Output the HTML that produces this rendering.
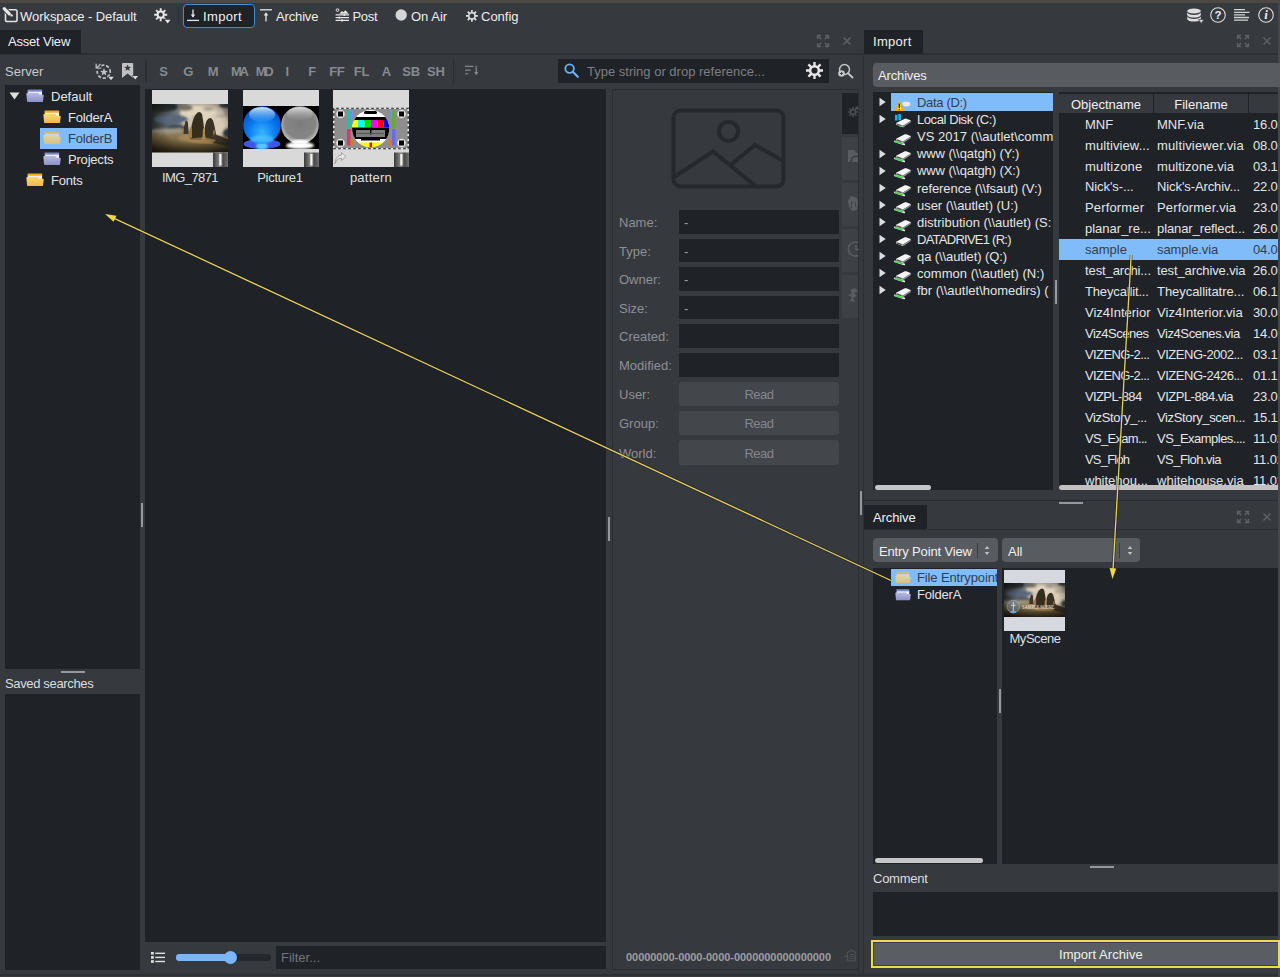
<!DOCTYPE html>
<html><head><meta charset="utf-8"><title>Workspace - Default</title>
<style>
*{box-sizing:border-box;margin:0;padding:0}
html,body{width:1280px;height:977px;overflow:hidden;background:#36393e}
body{position:relative;font-family:"Liberation Sans",sans-serif;font-size:13px;color:#e4e5e6;line-height:16px}
.a{position:absolute}
.t{position:absolute;white-space:pre;line-height:16px}
.dk{position:absolute;background:#1f2227}
.g{color:#8d9095}
.tab{position:absolute;background:#1f2227;height:24px;top:30px}
svg{position:absolute;overflow:visible}
</style></head><body>
<div class="a" style="left:0;top:0;width:1280px;height:3px;background:#4b4846"></div>
<div class="a" style="left:1278px;top:3px;width:2px;height:974px;background:#45474a"></div>
<div class="a" style="left:0;top:974px;width:1278px;height:2px;background:#2d3034"></div>
<!-- toolbar -->
<svg style="left:3px;top:7px" width="16" height="16" viewBox="0 0 16 16"><rect x="2.500" y="2.700" width="11.500" height="11.800" rx="1.800" fill="none" stroke="#e0e1e2" stroke-width="1.600"/><path d="M1.200 1.600L6.300 6.900" stroke="#36393e" stroke-width="5" stroke-linecap="round"/><path d="M1.200 1.600L6.300 6.900" stroke="#e6e7e8" stroke-width="3.200" stroke-linecap="round"/><circle cx="8.600" cy="8.400" r="1.200" fill="#e6e7e8"/></svg>
<div class="t" style="left:20px;top:9px;color:#eceded;letter-spacing:-0.050px">Workspace - Default</div>
<svg style="left:154px;top:8px" width="17" height="16" viewBox="0 0 17 16"><g fill="none" stroke="#e6e7e8" stroke-width="1.900"><path d="M6.700 0.200V13.200M0.200 6.700H13.200M2.100 2.100L11.300 11.300M11.300 2.100L2.100 11.300"/></g><circle cx="6.700" cy="6.700" r="4.100" fill="#e6e7e8"/><circle cx="6.700" cy="6.700" r="2.100" fill="#36393e"/><path d="M10.300 11.400H17L13.650 15.600Z" fill="#36393e" stroke="#36393e" stroke-width="1.400"/><path d="M10.800 11.700H16.500L13.650 15.400Z" fill="#e6e7e8"/></svg>
<div class="a" style="left:178px;top:7px;width:1px;height:18px;background:#2a2d31"></div>
<div class="a" style="left:183px;top:4px;width:72px;height:24px;border:1px solid #3d8fdc;border-radius:4px;background:#1f2227"></div>
<svg style="left:187px;top:9px" width="12" height="13" viewBox="0 0 12 13"><path d="M6 0.500V8" stroke="#e6e7e8" stroke-width="1.300" fill="none"/><path d="M3.700 5.600H8.300L6 8.600Z" fill="#e6e7e8"/><path d="M0 11.400H12" stroke="#e6e7e8" stroke-width="1.300"/></svg>
<div class="t" style="left:203px;top:9px;color:#f1f1f1;letter-spacing:0.350px">Import</div>
<svg style="left:260px;top:9px" width="12" height="13" viewBox="0 0 12 13"><path d="M0 0.800H12" stroke="#e6e7e8" stroke-width="1.300"/><path d="M6 12.500V5" stroke="#e6e7e8" stroke-width="1.300" fill="none"/><path d="M3.700 6.400H8.300L6 3.200Z" fill="#e6e7e8"/></svg>
<div class="t" style="left:276px;top:9px;color:#eceded;letter-spacing:-0.150px">Archive</div>
<svg style="left:335px;top:8px" width="14" height="14" viewBox="0 0 14 14"><g stroke="#e6e7e8" stroke-width="1.150" fill="none"><path d="M0.600 6.900H14M0.600 9.600H14M0.600 12.300H14"/></g><circle cx="2.500" cy="2.100" r="1.350" fill="none" stroke="#e6e7e8" stroke-width="1"/><path d="M4.200 5.700L7 2.900L8.300 4.200L10.400 2.200L13.600 5.700Z" fill="#e6e7e8"/><rect x="8.500" y="6" width="1.600" height="1.800" fill="#e6e7e8"/><rect x="3.600" y="8.600" width="1.600" height="2" fill="#e6e7e8"/><rect x="6.300" y="11.300" width="1.600" height="2.200" fill="#e6e7e8"/></svg>
<div class="t" style="left:352.5px;top:9px;color:#eceded;letter-spacing:-0.300px">Post</div>
<svg style="left:395px;top:9px" width="12" height="12" viewBox="0 0 12 12"><circle cx="6.200" cy="6" r="5.700" fill="#d4d5d6"/></svg>
<div class="t" style="left:411px;top:9px;color:#eceded;">On Air</div>
<svg style="left:465.700px;top:9.600px" width="11.800" height="11.800" viewBox="0 0 16 16"><g fill="none" stroke="#e0e1e2" stroke-width="2.200"><path d="M8 0V16M0 8H16M2.300 2.300L13.700 13.700M13.700 2.300L2.300 13.700"/></g><circle cx="8" cy="8" r="5.200" fill="#e0e1e2"/><circle cx="8" cy="8" r="3.300" fill="#36393e"/></svg>
<div class="t" style="left:481px;top:9px;color:#eceded;">Config</div>
<svg style="left:1187px;top:8px" width="18" height="16" viewBox="0 0 18 16"><g fill="#dcddde"><ellipse cx="7" cy="3" rx="6.800" ry="2.600"/><path d="M0.200 4.600C1.500 6.600 4.500 6.900 7 6.900S12.500 6.600 13.800 4.600V7.200C12.500 9.300 9.500 9.600 7 9.600S1.500 9.300 0.200 7.200Z"/><path d="M0.200 8.600C1.500 10.600 4.500 10.900 7 10.900S12.500 10.600 13.800 8.600V11.200C12.500 13.300 9.500 13.600 7 13.600S1.500 13.300 0.200 11.200Z"/><path d="M11.500 11.600H17L14.200 15.400Z" stroke="#36393e" stroke-width="0.700"/></g></svg>
<svg style="left:1210px;top:7px" width="16" height="16" viewBox="0 0 16 16"><circle cx="8" cy="8" r="7.300" fill="none" stroke="#dcddde" stroke-width="1.100"/><text x="8" y="12.200" text-anchor="middle" font-family="Liberation Sans" font-weight="bold" font-size="11.500" fill="#eeeeee">?</text></svg>
<svg style="left:1234px;top:9px" width="16" height="12" viewBox="0 0 16 12"><g stroke="#d0d1d2" stroke-width="1.300"><path d="M0 0.700H11M0 3.300H15.500M0 5.900H11M0 8.500H15M0 11.100H14"/></g></svg>
<svg style="left:1258px;top:7px" width="16" height="16" viewBox="0 0 16 16"><circle cx="8" cy="8" r="7.300" fill="none" stroke="#dcddde" stroke-width="1.100"/><text x="8" y="12.300" text-anchor="middle" font-family="Liberation Serif" font-style="italic" font-weight="bold" font-size="13" fill="#eeeeee">i</text></svg>
<!-- tabs -->
<div class="a" style="left:0;top:53px;width:1278px;height:2px;background:#2d3034"></div>
<div class="a" style="left:863px;top:55px;width:1px;height:919px;background:#2c2f33"></div>
<div class="tab" style="left:0;width:81px"></div>
<svg style="left:817px;top:35px" width="12" height="12" viewBox="0 0 12 12"><g stroke="#5d6065" stroke-width="1.3" fill="none"><path d="M0.500 4V0.500H4M0.500 0.500L4.300 4.300M8 0.500H11.500V4M11.500 0.500L7.700 4.300M0.500 8V11.500H4M0.500 11.500L4.300 7.700M11.500 8V11.500H8M11.500 11.500L7.700 7.700"/></g></svg>
<svg style="left:843px;top:37px" width="8" height="8" viewBox="0 0 8 8"><path d="M0.500 0.500L7.500 7.500M7.500 0.500L0.500 7.500" stroke="#5d6065" stroke-width="1.500" fill="none"/></svg>
<div class="tab" style="left:864px;width:59px"></div>
<svg style="left:1237px;top:35px" width="12" height="12" viewBox="0 0 12 12"><g stroke="#5d6065" stroke-width="1.3" fill="none"><path d="M0.500 4V0.500H4M0.500 0.500L4.300 4.300M8 0.500H11.500V4M11.500 0.500L7.700 4.300M0.500 8V11.500H4M0.500 11.500L4.300 7.700M11.500 8V11.500H8M11.500 11.500L7.700 7.700"/></g></svg>
<svg style="left:1263px;top:37px" width="8" height="8" viewBox="0 0 8 8"><path d="M0.500 0.500L7.500 7.500M7.500 0.500L0.500 7.500" stroke="#5d6065" stroke-width="1.500" fill="none"/></svg>
<div class="t" style="left:8px;top:34px;color:#f0f0f0;letter-spacing:-0.200px">Asset View</div>
<div class="t" style="left:873px;top:34px;color:#f0f0f0;letter-spacing:0.300px">Import</div>
<div class="t" style="left:5px;top:64px;color:#c9cbcd;">Server</div>
<svg style="left:94.500px;top:62.500px" width="19" height="18" viewBox="0 0 19 18"><circle cx="8.700" cy="8.700" r="6.500" fill="none" stroke="#bfc1c4" stroke-width="1.700" stroke-dasharray="3.200 1.700" stroke-dashoffset="2"/><path d="M0.200 0.400H2.100V3.300L5 0.400L6.200 1.600L3.400 4.300H6.600V5.900H0.200Z" fill="#bfc1c4" stroke="#36393e" stroke-width="0.600"/><path d="M9.00 5.10L10.06 7.74L12.90 7.93L10.71 9.76L11.41 12.52L9.00 11.00L6.59 12.52L7.29 9.76L5.10 7.93L7.94 7.74Z" fill="#bfc1c4"/><path d="M12.700 13.400H19.300L16 17.600Z" fill="#36393e"/><path d="M13.400 13.800H18.700L16 17.300Z" fill="#dcdddf"/></svg>
<svg style="left:121.800px;top:63px" width="18" height="18" viewBox="0 0 18 18"><path d="M0 0.900Q0 0 0.900 0H10.300Q11.200 0 11.200 0.900V15L5.600 10.400L0 15Z" fill="#bfc1c4"/><path d="M5.60 1.40L6.48 3.79L9.02 3.89L7.03 5.46L7.72 7.91L5.60 6.50L3.48 7.91L4.17 5.46L2.18 3.89L4.72 3.79Z" fill="#34373c"/><path d="M9.600 12.400H16.800L13.200 17Z" fill="#36393e"/><path d="M10.500 12.900H16L13.250 16.600Z" fill="#dcdddf"/></svg>
<div class="a" style="left:145px;top:59px;width:2px;height:24px;background:#2d3034"></div>
<div class="t" style="left:148.5px;top:64px;width:30px;text-align:center;color:#878a8f;font-weight:bold;letter-spacing:-0.300px">S</div>
<div class="t" style="left:173.2px;top:64px;width:30px;text-align:center;color:#878a8f;font-weight:bold;letter-spacing:-0.300px">G</div>
<div class="t" style="left:198.0px;top:64px;width:30px;text-align:center;color:#878a8f;font-weight:bold;letter-spacing:-0.300px">M</div>
<div class="t" style="left:222.8px;top:64px;width:30px;text-align:center;padding-left:2px;color:#878a8f;font-weight:bold;letter-spacing:-2.400px">MA</div>
<div class="t" style="left:247.5px;top:64px;width:30px;text-align:center;padding-left:2px;color:#878a8f;font-weight:bold;letter-spacing:-2.400px">MD</div>
<div class="t" style="left:272.2px;top:64px;width:30px;text-align:center;color:#878a8f;font-weight:bold;letter-spacing:-0.300px">I</div>
<div class="t" style="left:297.0px;top:64px;width:30px;text-align:center;color:#878a8f;font-weight:bold;letter-spacing:-0.300px">F</div>
<div class="t" style="left:321.8px;top:64px;width:30px;text-align:center;color:#878a8f;font-weight:bold;letter-spacing:-0.300px">FF</div>
<div class="t" style="left:346.5px;top:64px;width:30px;text-align:center;color:#878a8f;font-weight:bold;letter-spacing:-0.300px">FL</div>
<div class="t" style="left:371.2px;top:64px;width:30px;text-align:center;color:#878a8f;font-weight:bold;letter-spacing:-0.300px">A</div>
<div class="t" style="left:396.0px;top:64px;width:30px;text-align:center;color:#878a8f;font-weight:bold;letter-spacing:-0.300px">SB</div>
<div class="t" style="left:420.8px;top:64px;width:30px;text-align:center;color:#878a8f;font-weight:bold;letter-spacing:-0.300px">SH</div>
<div class="a" style="left:453px;top:59px;width:1px;height:24px;background:#2a2d31"></div>
<svg style="left:465px;top:65px" width="14" height="11" viewBox="0 0 15 11"><g stroke="#85888d" stroke-width="1.300" fill="none"><path d="M0 1H9M0 5H6M0 9H3.500M12 0.500V9"/></g><path d="M9.800 7.200H14.200L12 10.500Z" fill="#85888d"/></svg>
<div class="dk" style="left:558px;top:59px;width:271px;height:24px"></div>
<svg style="left:564px;top:63px" width="15" height="15" viewBox="0 0 15 15"><circle cx="5.600" cy="5.600" r="4.300" fill="none" stroke="#6db3f2" stroke-width="1.800"/><path d="M8.800 8.800L13.800 13.800" stroke="#6db3f2" stroke-width="2.200" stroke-linecap="round"/></svg>
<div class="t" style="left:587px;top:64px;color:#7c7f84;">Type string or drop reference...</div>
<svg style="left:806px;top:62px" width="17" height="17" viewBox="0 0 16 16"><g fill="none" stroke="#e6e7e8" stroke-width="2.200"><path d="M8 0V16M0 8H16M2.300 2.300L13.700 13.700M13.700 2.300L2.300 13.700"/></g><circle cx="8" cy="8" r="5.200" fill="#e6e7e8"/><circle cx="8" cy="8" r="2.900" fill="#1f2227"/></svg>
<svg style="left:837px;top:63px" width="17" height="17" viewBox="0 0 17 17"><circle cx="7.500" cy="6.500" r="5" fill="none" stroke="#c4c6c8" stroke-width="1.500"/><path d="M11 10.200L15.500 14.500" stroke="#c4c6c8" stroke-width="1.900" stroke-linecap="round"/><circle cx="4.500" cy="10.500" r="3.300" fill="#c4c6c8"/><path d="M3 10.500H6M4.500 9V12" stroke="#36393e" stroke-width="0.900"/></svg>
<div class="dk" style="left:5px;top:85px;width:135px;height:584px"></div>
<svg style="left:9px;top:92px" width="11" height="8" viewBox="0 0 11 8"><path d="M0.500 0.500H10.500L5.500 7.500Z" fill="#dcdddf"/></svg>
<svg style="left:26px;top:89px" width="18" height="14" viewBox="0 0 18 14" preserveAspectRatio="none"><defs><linearGradient id="fb26_89" x1="0" y1="0" x2="0" y2="1"><stop offset="0" stop-color="#b6bae0"/><stop offset="1" stop-color="#8c90c8"/></linearGradient></defs><path d="M1.500 1Q1.500 0.400 2.100 0.400H15.600Q16.200 0.400 16.200 1V5H1.500Z" fill="#8088cc"/><path d="M2.200 2.700H16V7H2.200Z" fill="#eef0f6"/><path d="M0.400 4.900Q0.300 4.100 1.100 4.100H12.200L13.500 5.700H17Q17.800 5.700 17.700 6.500L17 12.400Q16.900 13.100 16.200 13.100H1.900Q1.200 13.100 1.100 12.400Z" fill="url(#fb26_89)"/></svg><div class="t" style="left:51px;top:89px;color:#e4e5e6;">Default</div>
<svg style="left:43px;top:110px" width="18" height="14" viewBox="0 0 18 14" preserveAspectRatio="none"><defs><linearGradient id="fy43_110" x1="0" y1="0" x2="0" y2="1"><stop offset="0" stop-color="#fbd878"/><stop offset="1" stop-color="#f4b844"/></linearGradient></defs><path d="M1.500 1Q1.500 0.400 2.100 0.400H15.600Q16.200 0.400 16.200 1V5H1.500Z" fill="#f6a820"/><path d="M2.200 2.700H16V7H2.200Z" fill="#eef0f6"/><path d="M0.400 4.900Q0.300 4.100 1.100 4.100H12.200L13.500 5.700H17Q17.800 5.700 17.700 6.500L17 12.400Q16.900 13.100 16.200 13.100H1.900Q1.200 13.100 1.100 12.400Z" fill="url(#fy43_110)"/></svg><div class="t" style="left:68px;top:110px;color:#e4e5e6;letter-spacing:-0.200px">FolderA</div>
<div class="a" style="left:40px;top:128px;width:77px;height:21px;background:#80bbfa"></div>
<svg style="left:43px;top:131px" width="18" height="14" viewBox="0 0 18 14" preserveAspectRatio="none"><defs><linearGradient id="fs43_131" x1="0" y1="0" x2="0" y2="1"><stop offset="0" stop-color="#e4d4a0"/><stop offset="1" stop-color="#d6c088"/></linearGradient></defs><path d="M1.500 1Q1.500 0.400 2.100 0.400H15.600Q16.200 0.400 16.200 1V5H1.500Z" fill="#d8b870"/><path d="M2.200 2.700H16V7H2.200Z" fill="#c4d8f0"/><path d="M0.400 4.900Q0.300 4.100 1.100 4.100H12.200L13.500 5.700H17Q17.800 5.700 17.700 6.500L17 12.400Q16.900 13.100 16.200 13.100H1.900Q1.200 13.100 1.100 12.400Z" fill="url(#fs43_131)"/></svg><div class="t" style="left:68px;top:131px;color:#333f50;letter-spacing:-0.200px">FolderB</div>
<svg style="left:43px;top:152px" width="18" height="14" viewBox="0 0 18 14" preserveAspectRatio="none"><defs><linearGradient id="fb43_152" x1="0" y1="0" x2="0" y2="1"><stop offset="0" stop-color="#b6bae0"/><stop offset="1" stop-color="#8c90c8"/></linearGradient></defs><path d="M1.500 1Q1.500 0.400 2.100 0.400H15.600Q16.200 0.400 16.200 1V5H1.500Z" fill="#8088cc"/><path d="M2.200 2.700H16V7H2.200Z" fill="#eef0f6"/><path d="M0.400 4.900Q0.300 4.100 1.100 4.100H12.200L13.500 5.700H17Q17.800 5.700 17.700 6.500L17 12.400Q16.900 13.100 16.200 13.100H1.900Q1.200 13.100 1.100 12.400Z" fill="url(#fb43_152)"/></svg><div class="t" style="left:68px;top:152px;color:#e4e5e6;letter-spacing:-0.200px">Projects</div>
<svg style="left:26px;top:173px" width="18" height="14" viewBox="0 0 18 14" preserveAspectRatio="none"><defs><linearGradient id="fy26_173" x1="0" y1="0" x2="0" y2="1"><stop offset="0" stop-color="#fbd878"/><stop offset="1" stop-color="#f4b844"/></linearGradient></defs><path d="M1.500 1Q1.500 0.400 2.100 0.400H15.600Q16.200 0.400 16.200 1V5H1.500Z" fill="#f6a820"/><path d="M2.200 2.700H16V7H2.200Z" fill="#eef0f6"/><path d="M0.400 4.900Q0.300 4.100 1.100 4.100H12.200L13.500 5.700H17Q17.800 5.700 17.700 6.500L17 12.400Q16.900 13.100 16.200 13.100H1.900Q1.200 13.100 1.100 12.400Z" fill="url(#fy26_173)"/></svg><div class="t" style="left:51px;top:173px;color:#e4e5e6;letter-spacing:-0.200px">Fonts</div>
<div class="a" style="left:61px;top:671px;width:24px;height:2px;background:#97989b"></div>
<div class="dk" style="left:5px;top:694px;width:135px;height:276px"></div>
<div class="a" style="left:141px;top:503px;width:2px;height:24px;background:#97989b"></div>
<div class="dk" style="left:145px;top:89px;width:461px;height:853px"></div>
<div class="t" style="left:5px;top:676px;color:#dcddde;letter-spacing:-0.350px">Saved searches</div>
<svg style="left:152px;top:90px" width="76" height="77" viewBox="0 0 76 77">
<defs><linearGradient id="cg" x1="0" y1="0" x2="1" y2="0"><stop offset="0" stop-color="#3a3a3a"/><stop offset="0.450" stop-color="#8a8a8a"/><stop offset="0.700" stop-color="#4c4c4c"/><stop offset="1" stop-color="#707070"/></linearGradient>
<linearGradient id="sky" x1="0" y1="0" x2="1" y2="0"><stop offset="0" stop-color="#363e3a"/><stop offset="0.300" stop-color="#6a7078"/><stop offset="0.550" stop-color="#d4c8b4"/><stop offset="0.850" stop-color="#e0d4c0"/><stop offset="1" stop-color="#a8a090"/></linearGradient>
<linearGradient id="gnd" x1="0" y1="0" x2="0" y2="1"><stop offset="0" stop-color="#a48e6c"/><stop offset="0.500" stop-color="#74623e"/><stop offset="1" stop-color="#282214"/></linearGradient>
<radialGradient id="vg" cx="0.550" cy="0.450" r="0.750"><stop offset="0.500" stop-color="#000" stop-opacity="0"/><stop offset="1" stop-color="#000" stop-opacity="0.700"/></radialGradient>
<filter id="bl"><feGaussianBlur stdDeviation="0.900"/></filter><filter id="bl0"><feGaussianBlur stdDeviation="0.700"/></filter><clipPath id="c1"><rect x="0" y="14" width="76" height="48.500"/></clipPath></defs>
<rect width="76" height="77" fill="#d9d9d9"/>
<g clip-path="url(#c1)"><rect x="0" y="14" width="76" height="30" fill="url(#sky)"/>
<g filter="url(#bl)"><ellipse cx="50" cy="23" rx="22" ry="8" fill="#e0d4be"/><ellipse cx="66" cy="33" rx="11" ry="9" fill="#d8ccb6"/><ellipse cx="40" cy="33" rx="10" ry="5" fill="#cfc4b0"/><ellipse cx="19" cy="29" rx="17" ry="4.500" fill="#5a687c"/><ellipse cx="25" cy="38" rx="10" ry="3.500" fill="#3e4c5c"/><ellipse cx="8" cy="17" rx="18" ry="5" fill="#2e3632"/><ellipse cx="76" cy="43" rx="5" ry="5" fill="#2c3c44"/><ellipse cx="74" cy="15.500" rx="7" ry="2.500" fill="#3c4a52"/><ellipse cx="33" cy="18" rx="8" ry="3" fill="#7a7468"/><ellipse cx="56" cy="19" rx="5" ry="1.800" fill="#a8a096"/><ellipse cx="44" cy="27" rx="4" ry="1.500" fill="#b8ae9c"/><ellipse cx="68" cy="26" rx="5" ry="2" fill="#c0b6a4"/>
<path d="M-2 41L28 38L50 43L78 47V66H-2Z" fill="url(#gnd)"/><ellipse cx="14" cy="41" rx="16" ry="2.500" fill="#9c9484"/><ellipse cx="40" cy="48" rx="14" ry="4" fill="#b49464" opacity="0.600"/></g>
<g filter="url(#bl0)"><path d="M31.500 44L32 37L33.500 31L35 30.500L36 33L36.500 44Z" fill="#3c3626"/><path d="M38.500 50L39.500 36L41 30L43 25.500L45.500 22.500L48 22L50 24L51 30L52 38L53 50Z" fill="#352e1e"/><path d="M52.500 50L53 36L54.500 31L56.500 28.500L59 28L61 30.500L62.500 36L64 44L66 50Z" fill="#383022"/><path d="M36.500 47L38 38L40 35.500L40 48Z" fill="#a07840"/><path d="M50.300 50L51 39L52.500 37L53.500 50Z" fill="#b08848"/><path d="M60.500 50L61 41L62.500 39L64.500 50Z" fill="#8a6a3c"/><path d="M62 44L70 47L78 50V57L58 52Z" fill="#3e3626"/><path d="M36 49L52 47L64 50L60 54L40 53Z" fill="#a88450" opacity="0.700"/></g>
<rect x="0" y="14" width="76" height="48.500" fill="url(#vg)"/></g>
<g transform="translate(61,62.500)"><rect width="15" height="14.500" fill="url(#cg)"/><rect x="6.300" y="1.500" width="2.200" height="11.500" fill="#f4f4f4"/></g></svg>
<div class="t" style="left:150px;top:170px;width:80px;text-align:center;color:#dfe0e1;letter-spacing:-0.600px">IMG_7871</div>
<svg style="left:243px;top:90px" width="76" height="77" viewBox="0 0 76 77">
<defs><radialGradient id="bs" cx="0.500" cy="0.700" r="0.700"><stop offset="0" stop-color="#38b4ff"/><stop offset="0.500" stop-color="#0a7cf0"/><stop offset="1" stop-color="#0848c0"/></radialGradient>
<linearGradient id="bh" x1="0" y1="0" x2="0" y2="1"><stop offset="0" stop-color="#d8f0ff" stop-opacity="0.950"/><stop offset="1" stop-color="#6ac0ff" stop-opacity="0.100"/></linearGradient>
<radialGradient id="gs" cx="0.500" cy="0.450" r="0.550"><stop offset="0" stop-color="#7c7c7c"/><stop offset="0.750" stop-color="#868686"/><stop offset="1" stop-color="#c8c8c8"/></radialGradient>
<linearGradient id="gh" x1="0" y1="0" x2="0" y2="1"><stop offset="0" stop-color="#e8e8e8" stop-opacity="0.900"/><stop offset="1" stop-color="#a0a0a0" stop-opacity="0"/></linearGradient>
<filter id="b2"><feGaussianBlur stdDeviation="1.200"/></filter><clipPath id="c2"><rect x="0" y="16" width="76" height="43"/></clipPath></defs>
<rect width="76" height="77" fill="#d9d9d9"/><rect x="0" y="16" width="76" height="43" fill="#000"/>
<g clip-path="url(#c2)"><ellipse cx="19" cy="54" rx="18.500" ry="5" fill="#3c58e0"/><ellipse cx="19" cy="56" rx="6" ry="3.500" fill="#58c8ff" filter="url(#b2)"/>
<circle cx="19" cy="35" r="18.800" fill="url(#bs)"/><ellipse cx="19" cy="24.500" rx="13" ry="7.500" fill="url(#bh)"/><ellipse cx="19" cy="49" rx="12" ry="4" fill="#5cd0ff" opacity="0.600" filter="url(#b2)"/>
<ellipse cx="57" cy="55.500" rx="14" ry="3.500" fill="#fff" filter="url(#b2)"/>
<circle cx="57" cy="35" r="18.800" fill="url(#gs)"/><ellipse cx="57" cy="24" rx="13" ry="7" fill="url(#gh)"/><ellipse cx="57" cy="52" rx="9" ry="2.500" fill="#fff" filter="url(#b2)"/></g>
<g transform="translate(61,62.500)"><rect width="15" height="14.500" fill="url(#cg)"/><rect x="6.300" y="1.500" width="2.200" height="11.500" fill="#f4f4f4"/></g></svg>
<div class="t" style="left:240px;top:170px;width:80px;text-align:center;color:#dfe0e1;letter-spacing:-0.250px">Picture1</div>
<svg style="left:333px;top:90px" width="76" height="77" viewBox="0 0 76 77">
<defs><clipPath id="c3"><circle cx="37.700" cy="38.600" r="18.600"/></clipPath><filter id="b5" x="0" y="0" width="1" height="1"><feGaussianBlur stdDeviation="0.400"/></filter><clipPath id="c5"><rect x="0" y="17.500" width="76" height="42"/></clipPath></defs>
<rect width="76" height="77" fill="#d9d9d9"/>
<g clip-path="url(#c5)"><g filter="url(#b5)"><rect x="0" y="17.500" width="76" height="42" fill="#8e8e8e"/>
<rect x="0.750" y="18.250" width="74.500" height="40.500" fill="none" stroke="#e8e8e8" stroke-width="1.500" stroke-dasharray="2.500 2.500"/><rect x="0.750" y="18.250" width="74.500" height="40.500" fill="none" stroke="#4a4a4a" stroke-width="1.500" stroke-dasharray="2.500 2.500" stroke-dashoffset="2.500"/>
<g><circle cx="7.500" cy="24" r="4.300" fill="#e4e4e4"/><rect x="5" y="21.500" width="5" height="5" fill="#000"/><circle cx="68.500" cy="24" r="4.300" fill="#e4e4e4"/><rect x="66" y="21.500" width="5" height="5" fill="#000"/><circle cx="7.500" cy="53" r="4.300" fill="#e4e4e4"/><rect x="5" y="50.500" width="5" height="5" fill="#000"/><circle cx="68.500" cy="53" r="4.300" fill="#e4e4e4"/><rect x="66" y="50.500" width="5" height="5" fill="#000"/></g>
<rect x="14" y="20.500" width="3.500" height="17.500" fill="#18c8a0"/><rect x="17.500" y="20.500" width="2.500" height="8" fill="#6890ff"/><rect x="14" y="39" width="3.500" height="16.500" fill="#d83870"/><rect x="17.500" y="49.500" width="2.500" height="6" fill="#e07810"/>
<rect x="59" y="20.500" width="3.500" height="17.500" fill="#68a838"/><rect x="56" y="20.500" width="2.500" height="8" fill="#6890ff"/><rect x="59" y="39" width="3.500" height="16.500" fill="#6868f8"/><rect x="56" y="49.500" width="2.500" height="6" fill="#e07810"/>
<g clip-path="url(#c3)"><rect x="18" y="19" width="40" height="40" fill="#fff"/><rect x="31" y="21" width="13" height="3" rx="1.500" fill="#000"/><rect x="18" y="27" width="40" height="4" fill="#000"/>
<rect x="18" y="30" width="7" height="7.500" fill="#ffff00"/><rect x="25" y="30" width="6.500" height="7.500" fill="#00ffff"/><rect x="31.500" y="30" width="6.500" height="7.500" fill="#00e000"/><rect x="38" y="30" width="6.500" height="7.500" fill="#ff00ff"/><rect x="44.500" y="30" width="6" height="7.500" fill="#ff0000"/><rect x="50.500" y="30" width="7" height="7.500" fill="#0000e0"/>
<rect x="18" y="37.500" width="40" height="11.500" fill="#000"/><rect x="23" y="40" width="29" height="7" fill="#7c7c7c"/><rect x="37" y="37.500" width="1.400" height="7" fill="#000"/><rect x="24" y="43" width="27" height="1" fill="#555"/>
<rect x="18" y="49" width="40" height="3.500" fill="#fff"/><rect x="28" y="49" width="19" height="1.500" fill="#000"/><rect x="18" y="52.500" width="40" height="6" fill="#ffff00"/><rect x="36.500" y="52.500" width="2.500" height="6" fill="#ff0000"/></g>
</g></g>
<path d="M2 73.500C2.500 68 5 65.500 8.500 65V62.500L13 66.500L8.500 70.500V68C5.500 68 3.500 70 2 73.500Z" fill="#e8e8e8" stroke="#8c8c8c" stroke-width="0.700"/>
<g transform="translate(61,62.500)"><rect width="15" height="14.500" fill="url(#cg)"/><rect x="6.300" y="1.500" width="2.200" height="11.500" fill="#f4f4f4"/></g></svg>
<div class="t" style="left:331px;top:170px;width:80px;text-align:center;color:#dfe0e1;letter-spacing:0.250px">pattern</div>
<svg style="left:151px;top:952px" width="14" height="11" viewBox="0 0 14 11"><g fill="#e0e1e2"><rect x="0" y="0" width="2.800" height="2.600"/><rect x="0" y="4.100" width="2.800" height="2.600"/><rect x="0" y="8.200" width="2.800" height="2.600"/><rect x="4.300" y="0.600" width="9.700" height="1.400"/><rect x="4.300" y="4.700" width="9.700" height="1.400"/><rect x="4.300" y="8.800" width="9.700" height="1.400"/></g></svg>
<div class="a" style="left:176px;top:954px;width:95px;height:6.500px;border-radius:3px;background:#25282c"></div>
<div class="a" style="left:176px;top:954px;width:52px;height:6.500px;border-radius:3px;background:#7ab6f8"></div>
<div class="a" style="left:223.500px;top:951px;width:13px;height:13px;border-radius:7px;background:#7ab6f8"></div>
<div class="dk" style="left:276px;top:946px;width:330px;height:23px"></div>
<div class="a" style="left:608px;top:517px;width:2px;height:24px;background:#97989b"></div>
<div class="t" style="left:281px;top:950px;color:#72757a;">Filter...</div>
<!-- props -->
<div class="a" style="left:612px;top:89px;width:247px;height:881px;border:1px solid #2a2d31;background:#36393e"></div>
<svg style="left:671px;top:108px" width="115" height="81" viewBox="0 0 115 81"><g fill="none" stroke="#25282c" stroke-width="4"><rect x="2.500" y="2.500" width="110" height="76" rx="7"/><circle cx="57.500" cy="23.300" r="9.600"/><path d="M2.500 69.500L42 43.500L84 77.500M59.500 57L84 37L112.500 53" stroke-linejoin="miter"/></g></svg>
<div class="dk" style="left:679px;top:210.0px;width:160px;height:23.500px"></div><div class="t" style="left:619px;top:215px;color:#8d9095;">Name:</div>
<div class="t" style="left:684px;top:215px;color:#9a9da1;">-</div>
<div class="dk" style="left:679px;top:238.6px;width:160px;height:23.500px"></div><div class="t" style="left:619px;top:244px;color:#8d9095;">Type:</div>
<div class="t" style="left:684px;top:244px;color:#9a9da1;">-</div>
<div class="dk" style="left:679px;top:267.2px;width:160px;height:23.500px"></div><div class="t" style="left:619px;top:272px;color:#8d9095;">Owner:</div>
<div class="t" style="left:684px;top:272px;color:#9a9da1;">-</div>
<div class="dk" style="left:679px;top:295.8px;width:160px;height:23.500px"></div><div class="t" style="left:619px;top:301px;color:#8d9095;">Size:</div>
<div class="t" style="left:684px;top:301px;color:#9a9da1;">-</div>
<div class="dk" style="left:679px;top:324.4px;width:160px;height:23.500px"></div><div class="t" style="left:619px;top:329px;color:#8d9095;">Created:</div>
<div class="dk" style="left:679px;top:353.0px;width:160px;height:23.500px"></div><div class="t" style="left:619px;top:358px;color:#8d9095;">Modified:</div>
<div class="a" style="left:679px;top:381.5px;width:160px;height:24.500px;border-radius:3px;background:#43464b"></div><div class="t" style="left:619px;top:387px;color:#8d9095;">User:</div>
<div class="t" style="left:679px;top:387px;width:160px;text-align:center;color:#84878c;letter-spacing:-0.500px">Read</div>
<div class="a" style="left:679px;top:410.9px;width:160px;height:24.500px;border-radius:3px;background:#43464b"></div><div class="t" style="left:619px;top:416px;color:#8d9095;">Group:</div>
<div class="t" style="left:679px;top:416px;width:160px;text-align:center;color:#84878c;letter-spacing:-0.500px">Read</div>
<div class="a" style="left:679px;top:440.3px;width:160px;height:24.500px;border-radius:3px;background:#43464b"></div><div class="t" style="left:619px;top:446px;color:#8d9095;">World:</div>
<div class="t" style="left:679px;top:446px;width:160px;text-align:center;color:#84878c;letter-spacing:-0.500px">Read</div>
<div class="t" style="left:626px;top:949px;font-size:11px;font-weight:bold;color:#9c9ea1;letter-spacing:-0.050px">00000000-0000-0000-0000000000000000</div>
<svg style="left:843px;top:949px" width="13" height="13" viewBox="0 0 13 13"><g fill="none" stroke="#4c4f54" stroke-width="1.200"><path d="M4.500 3.500L8 0.800L12.300 3.500V11.800H4.500ZM6.500 5.500H11M6.500 7.500H11M6.500 9.500H11M0.500 7.500H4.500"/></g></svg>
<div class="dk" style="left:842px;top:93px;width:16px;height:41px"></div>
<div class="a" style="left:842px;top:137px;width:16px;height:43px;background:#3d4045"></div>
<div class="a" style="left:842px;top:183px;width:16px;height:43px;background:#3d4045"></div>
<div class="a" style="left:842px;top:229px;width:16px;height:43px;background:#3d4045"></div>
<div class="a" style="left:842px;top:275px;width:16px;height:43px;background:#3d4045"></div>
<div class="a" style="left:842px;top:90px;width:17px;height:232px;overflow:hidden">
<svg style="left:6px;top:15px" width="10" height="14" viewBox="0 0 10 14"><g fill="none" stroke="#4b4e53" stroke-width="1.600"><path d="M5 2V12M0 7H10M1.500 3.500L8.500 10.500M8.500 3.500L1.500 10.500"/></g><circle cx="5" cy="7" r="3" fill="#4b4e53"/><circle cx="5" cy="7" r="1.500" fill="#1f2227"/><circle cx="9" cy="3" r="1.800" fill="#4b4e53"/></svg>
<svg style="left:6px;top:60px" width="10" height="13" viewBox="0 0 10 13"><path d="M0 0H6L10 4V12H0Z" fill="#595c61"/><path d="M3 12C3 8 6 6 10 6" stroke="#3d4045" stroke-width="1.800" fill="none"/></svg>
<svg style="left:6px;top:106px" width="10" height="15" viewBox="0 0 10 15"><path d="M3 0L9 2L10 6L9 14L4 15L1 11L0 5Z" fill="#595c61"/><path d="M4 5L3 12M7 6L8 11" stroke="#3d4045" stroke-width="1"/></svg>
<svg style="left:7px;top:151px" width="10" height="16" viewBox="0 0 10 16"><path d="M9 1.500A7 7 0 1 0 9 14.500" fill="none" stroke="#595c61" stroke-width="1.500"/><path d="M7 4V8.500H10" fill="none" stroke="#595c61" stroke-width="1.500"/></svg>
<svg style="left:6px;top:198px" width="10" height="15" viewBox="0 0 10 15"><path d="M2 2L7 0L10 3L6 5L9 8L5 10L7 14L2 13L4 9L0 7L4 5Z" fill="#595c61"/></svg>
</div>
<div class="a" style="left:860px;top:491px;width:2px;height:24px;background:#97989b"></div>
<!-- import -->
<div class="a" style="left:873px;top:63px;width:410px;height:24px;border-radius:4px;background:#585b5f"></div>
<div class="t" style="left:878px;top:68px;color:#f0f0f0;letter-spacing:-0.150px">Archives</div>
<div class="dk" style="left:873px;top:92px;width:180px;height:398px;overflow:hidden">
<div class="a" style="left:18px;top:1px;width:162px;height:17.500px;background:#80bbfa"></div>
<svg style="left:6.3px;top:5.3px" width="7" height="10" viewBox="0 0 7 10"><path d="M0.500 0.700V9.300L6.700 5Z" fill="#dcdddf"/></svg><svg style="left:21px;top:7.5px" width="18" height="12" viewBox="0 0 18 12"><path d="M8 3.500Q9.500 0.500 13 1.800Q17 2 16.300 5Q15 7 10 6.500Z" fill="#ece8e0"/><path d="M5.300 0L10.400 11H0Z" fill="#ffae00"/><path d="M5.300 2L7.500 9.500H3Z" fill="#ffd84a"/><path d="M5.300 3.500V8M5.300 9.200V10.300" stroke="#3a2800" stroke-width="1.400"/></svg><div class="t" style="left:44px;top:3px;color:#333f50;letter-spacing:-0.32px">Data (D:)</div>
<svg style="left:6.3px;top:22.4px" width="7" height="10" viewBox="0 0 7 10"><path d="M0.500 0.700V9.300L6.700 5Z" fill="#dcdddf"/></svg><svg style="left:21px;top:22.2px" width="18" height="14" viewBox="0 0 18 14"><rect x="1" y="0.700" width="2.500" height="5.800" fill="#18b4f0"/><rect x="4.300" y="0" width="2.600" height="6.300" fill="#18b4f0"/><g transform="translate(0.6,4.3) scale(0.940,0.880)"><path d="M1.600 5.300L10.800 0.400Q11.600 0.100 12.400 0.400L17 2.300Q17.600 2.700 17 3.200L9.600 8.300Q9 8.600 8.300 8.300L1.600 5.600Z" fill="#f4f4f4"/><path d="M1.500 5.400L9 8.450V10.400L1.500 7.300Z" fill="#b0b0b0"/><path d="M9 8.450L17.300 2.800V4.600L9 10.400Z" fill="#8e8e8e"/><path d="M2.800 6.500L7.200 8.350V9.100L2.800 7.250Z" fill="#2a2a2a"/></g><path d="M5 12L7 12.800" stroke="#46d250" stroke-width="1"/></svg><div class="t" style="left:44px;top:20px;color:#e4e5e6;letter-spacing:-0.42px">Local Disk (C:)</div>
<svg style="left:21px;top:41.0px" width="18" height="12" viewBox="0 0 18 12"><g transform="translate(0.6,1) scale(0.940,0.880)"><path d="M1.600 5.300L10.800 0.400Q11.600 0.100 12.400 0.400L17 2.300Q17.600 2.700 17 3.200L9.600 8.300Q9 8.600 8.300 8.300L1.600 5.600Z" fill="#f4f4f4"/><path d="M1.500 5.400L9 8.450V10.400L1.500 7.300Z" fill="#b0b0b0"/><path d="M9 8.450L17.300 2.800V4.600L9 10.400Z" fill="#8e8e8e"/><path d="M2.800 6.500L7.200 8.350V9.100L2.800 7.250Z" fill="#2a2a2a"/></g><path d="M0.800 8.400L10.200 11.400" stroke="#e8e8e8" stroke-width="1.900" stroke-linecap="round"/><path d="M1.300 8.550L8.300 10.800" stroke="#46d250" stroke-width="1.500" stroke-linecap="round"/></svg><div class="t" style="left:44px;top:37px;color:#e4e5e6;letter-spacing:0.02px">VS 2017 (\\autlet\comm</div>
<svg style="left:6.3px;top:56.6px" width="7" height="10" viewBox="0 0 7 10"><path d="M0.500 0.700V9.300L6.700 5Z" fill="#dcdddf"/></svg><svg style="left:21px;top:58.1px" width="18" height="12" viewBox="0 0 18 12"><g transform="translate(0.6,1) scale(0.940,0.880)"><path d="M1.600 5.300L10.800 0.400Q11.600 0.100 12.400 0.400L17 2.300Q17.600 2.700 17 3.200L9.600 8.300Q9 8.600 8.300 8.300L1.600 5.600Z" fill="#f4f4f4"/><path d="M1.500 5.400L9 8.450V10.400L1.500 7.300Z" fill="#b0b0b0"/><path d="M9 8.450L17.300 2.800V4.600L9 10.400Z" fill="#8e8e8e"/><path d="M2.800 6.500L7.200 8.350V9.100L2.800 7.250Z" fill="#2a2a2a"/></g><path d="M0.800 8.400L10.200 11.400" stroke="#e8e8e8" stroke-width="1.900" stroke-linecap="round"/><path d="M1.300 8.550L8.300 10.800" stroke="#46d250" stroke-width="1.500" stroke-linecap="round"/></svg><div class="t" style="left:44px;top:54px;color:#e4e5e6;letter-spacing:-0.1px">www (\\qatgh) (Y:)</div>
<svg style="left:6.3px;top:73.7px" width="7" height="10" viewBox="0 0 7 10"><path d="M0.500 0.700V9.300L6.700 5Z" fill="#dcdddf"/></svg><svg style="left:21px;top:75.2px" width="18" height="12" viewBox="0 0 18 12"><g transform="translate(0.6,1) scale(0.940,0.880)"><path d="M1.600 5.300L10.800 0.400Q11.600 0.100 12.400 0.400L17 2.300Q17.600 2.700 17 3.200L9.600 8.300Q9 8.600 8.300 8.300L1.600 5.600Z" fill="#f4f4f4"/><path d="M1.500 5.400L9 8.450V10.400L1.500 7.300Z" fill="#b0b0b0"/><path d="M9 8.450L17.300 2.800V4.600L9 10.400Z" fill="#8e8e8e"/><path d="M2.800 6.500L7.200 8.350V9.100L2.800 7.250Z" fill="#2a2a2a"/></g><path d="M0.800 8.400L10.200 11.400" stroke="#e8e8e8" stroke-width="1.900" stroke-linecap="round"/><path d="M1.300 8.550L8.300 10.800" stroke="#46d250" stroke-width="1.500" stroke-linecap="round"/></svg><div class="t" style="left:44px;top:71px;color:#e4e5e6;letter-spacing:-0.1px">www (\\qatgh) (X:)</div>
<svg style="left:6.3px;top:90.8px" width="7" height="10" viewBox="0 0 7 10"><path d="M0.500 0.700V9.300L6.700 5Z" fill="#dcdddf"/></svg><svg style="left:21px;top:92.3px" width="18" height="12" viewBox="0 0 18 12"><g transform="translate(0.6,1) scale(0.940,0.880)"><path d="M1.600 5.300L10.800 0.400Q11.600 0.100 12.400 0.400L17 2.300Q17.600 2.700 17 3.200L9.600 8.300Q9 8.600 8.300 8.300L1.600 5.600Z" fill="#f4f4f4"/><path d="M1.500 5.400L9 8.450V10.400L1.500 7.300Z" fill="#b0b0b0"/><path d="M9 8.450L17.300 2.800V4.600L9 10.400Z" fill="#8e8e8e"/><path d="M2.800 6.500L7.200 8.350V9.100L2.800 7.250Z" fill="#2a2a2a"/></g><path d="M0.800 8.400L10.200 11.400" stroke="#e8e8e8" stroke-width="1.900" stroke-linecap="round"/><path d="M1.300 8.550L8.300 10.800" stroke="#46d250" stroke-width="1.500" stroke-linecap="round"/></svg><div class="t" style="left:44px;top:89px;color:#e4e5e6;letter-spacing:-0.08px">reference (\\fsaut) (V:)</div>
<svg style="left:6.3px;top:107.9px" width="7" height="10" viewBox="0 0 7 10"><path d="M0.500 0.700V9.300L6.700 5Z" fill="#dcdddf"/></svg><svg style="left:21px;top:109.4px" width="18" height="12" viewBox="0 0 18 12"><g transform="translate(0.6,1) scale(0.940,0.880)"><path d="M1.600 5.300L10.800 0.400Q11.600 0.100 12.400 0.400L17 2.300Q17.600 2.700 17 3.200L9.600 8.300Q9 8.600 8.300 8.300L1.600 5.600Z" fill="#f4f4f4"/><path d="M1.500 5.400L9 8.450V10.400L1.500 7.300Z" fill="#b0b0b0"/><path d="M9 8.450L17.300 2.800V4.600L9 10.400Z" fill="#8e8e8e"/><path d="M2.800 6.500L7.200 8.350V9.100L2.800 7.250Z" fill="#2a2a2a"/></g><path d="M0.800 8.400L10.200 11.400" stroke="#e8e8e8" stroke-width="1.900" stroke-linecap="round"/><path d="M1.300 8.550L8.300 10.800" stroke="#46d250" stroke-width="1.500" stroke-linecap="round"/></svg><div class="t" style="left:44px;top:106px;color:#e4e5e6;letter-spacing:-0.04px">user (\\autlet) (U:)</div>
<svg style="left:6.3px;top:125.0px" width="7" height="10" viewBox="0 0 7 10"><path d="M0.500 0.700V9.300L6.700 5Z" fill="#dcdddf"/></svg><svg style="left:21px;top:126.5px" width="18" height="12" viewBox="0 0 18 12"><g transform="translate(0.6,1) scale(0.940,0.880)"><path d="M1.600 5.300L10.800 0.400Q11.600 0.100 12.400 0.400L17 2.300Q17.600 2.700 17 3.200L9.600 8.300Q9 8.600 8.300 8.300L1.600 5.600Z" fill="#f4f4f4"/><path d="M1.500 5.400L9 8.450V10.400L1.500 7.300Z" fill="#b0b0b0"/><path d="M9 8.450L17.300 2.800V4.600L9 10.400Z" fill="#8e8e8e"/><path d="M2.800 6.500L7.200 8.350V9.100L2.800 7.250Z" fill="#2a2a2a"/></g><path d="M0.800 8.400L10.200 11.400" stroke="#e8e8e8" stroke-width="1.900" stroke-linecap="round"/><path d="M1.300 8.550L8.300 10.800" stroke="#46d250" stroke-width="1.500" stroke-linecap="round"/></svg><div class="t" style="left:44px;top:123px;color:#e4e5e6;letter-spacing:0px">distribution (\\autlet) (S:</div>
<svg style="left:6.3px;top:142.1px" width="7" height="10" viewBox="0 0 7 10"><path d="M0.500 0.700V9.300L6.700 5Z" fill="#dcdddf"/></svg><svg style="left:21px;top:143.6px" width="18" height="12" viewBox="0 0 18 12"><g transform="translate(0.6,1) scale(0.940,0.880)"><path d="M1.600 5.300L10.800 0.400Q11.600 0.100 12.400 0.400L17 2.300Q17.600 2.700 17 3.200L9.600 8.300Q9 8.600 8.300 8.300L1.600 5.600Z" fill="#f4f4f4"/><path d="M1.500 5.400L9 8.450V10.400L1.500 7.300Z" fill="#b0b0b0"/><path d="M9 8.450L17.300 2.800V4.600L9 10.400Z" fill="#8e8e8e"/><path d="M2.800 6.500L7.200 8.350V9.100L2.800 7.250Z" fill="#2a2a2a"/></g></svg><div class="t" style="left:44px;top:140px;color:#e4e5e6;letter-spacing:-0.75px">DATADRIVE1 (R:)</div>
<svg style="left:6.3px;top:159.2px" width="7" height="10" viewBox="0 0 7 10"><path d="M0.500 0.700V9.300L6.700 5Z" fill="#dcdddf"/></svg><svg style="left:21px;top:160.7px" width="18" height="12" viewBox="0 0 18 12"><g transform="translate(0.6,1) scale(0.940,0.880)"><path d="M1.600 5.300L10.800 0.400Q11.600 0.100 12.400 0.400L17 2.300Q17.600 2.700 17 3.200L9.600 8.300Q9 8.600 8.300 8.300L1.600 5.600Z" fill="#f4f4f4"/><path d="M1.500 5.400L9 8.450V10.400L1.500 7.300Z" fill="#b0b0b0"/><path d="M9 8.450L17.300 2.800V4.600L9 10.400Z" fill="#8e8e8e"/><path d="M2.800 6.500L7.200 8.350V9.100L2.800 7.250Z" fill="#2a2a2a"/></g><path d="M0.800 8.400L10.200 11.400" stroke="#e8e8e8" stroke-width="1.900" stroke-linecap="round"/><path d="M1.300 8.550L8.300 10.800" stroke="#46d250" stroke-width="1.500" stroke-linecap="round"/></svg><div class="t" style="left:44px;top:157px;color:#e4e5e6;letter-spacing:-0.1px">qa (\\autlet) (Q:)</div>
<svg style="left:6.3px;top:176.3px" width="7" height="10" viewBox="0 0 7 10"><path d="M0.500 0.700V9.300L6.700 5Z" fill="#dcdddf"/></svg><svg style="left:21px;top:177.8px" width="18" height="12" viewBox="0 0 18 12"><g transform="translate(0.6,1) scale(0.940,0.880)"><path d="M1.600 5.300L10.800 0.400Q11.600 0.100 12.400 0.400L17 2.300Q17.600 2.700 17 3.200L9.600 8.300Q9 8.600 8.300 8.300L1.600 5.600Z" fill="#f4f4f4"/><path d="M1.500 5.400L9 8.450V10.400L1.500 7.300Z" fill="#b0b0b0"/><path d="M9 8.450L17.300 2.800V4.600L9 10.400Z" fill="#8e8e8e"/><path d="M2.800 6.500L7.200 8.350V9.100L2.800 7.250Z" fill="#2a2a2a"/></g><path d="M0.800 8.400L10.200 11.400" stroke="#e8e8e8" stroke-width="1.900" stroke-linecap="round"/><path d="M1.300 8.550L8.300 10.800" stroke="#46d250" stroke-width="1.500" stroke-linecap="round"/></svg><div class="t" style="left:44px;top:174px;color:#e4e5e6;letter-spacing:0.04px">common (\\autlet) (N:)</div>
<svg style="left:6.3px;top:193.4px" width="7" height="10" viewBox="0 0 7 10"><path d="M0.500 0.700V9.300L6.700 5Z" fill="#dcdddf"/></svg><svg style="left:21px;top:194.9px" width="18" height="12" viewBox="0 0 18 12"><g transform="translate(0.6,1) scale(0.940,0.880)"><path d="M1.600 5.300L10.800 0.400Q11.600 0.100 12.400 0.400L17 2.300Q17.600 2.700 17 3.200L9.600 8.300Q9 8.600 8.300 8.300L1.600 5.600Z" fill="#f4f4f4"/><path d="M1.500 5.400L9 8.450V10.400L1.500 7.300Z" fill="#b0b0b0"/><path d="M9 8.450L17.300 2.800V4.600L9 10.400Z" fill="#8e8e8e"/><path d="M2.800 6.500L7.200 8.350V9.100L2.800 7.250Z" fill="#2a2a2a"/></g><path d="M0.800 8.400L10.200 11.400" stroke="#e8e8e8" stroke-width="1.900" stroke-linecap="round"/><path d="M1.300 8.550L8.300 10.800" stroke="#46d250" stroke-width="1.500" stroke-linecap="round"/></svg><div class="t" style="left:44px;top:191px;color:#e4e5e6;letter-spacing:0px">fbr (\\autlet\homedirs) (</div>
<div class="a" style="left:2px;top:393px;width:56px;height:5px;border-radius:3px;background:#c4c6c8"></div></div><div class="a" style="left:1055px;top:280px;width:2px;height:24px;background:#97989b"></div>
<div class="dk" style="left:1059px;top:92px;width:219px;height:398px"></div>
<div class="a" style="left:1059px;top:94px;width:94px;height:19px;background:#36393e"></div>
<div class="a" style="left:1154px;top:94px;width:94px;height:19px;background:#36393e"></div>
<div class="a" style="left:1249px;top:94px;width:29px;height:19px;background:#36393e"></div>
<div class="t" style="left:1059px;top:97px;width:94px;text-align:center;color:#f0f0f0">Objectname</div>
<div class="t" style="left:1154px;top:97px;width:94px;text-align:center;color:#f0f0f0">Filename</div>
<div class="a" style="left:1059px;top:239px;width:219px;height:21px;background:#80bbfa"></div>
<div class="a" style="left:1059px;top:114px;width:219px;height:376px;overflow:hidden">
<div class="t" style="left:26px;top:2.7px;color:#e4e5e6;letter-spacing:0px">MNF</div><div class="t" style="left:98px;top:2.7px;color:#e4e5e6;letter-spacing:0px">MNF.via</div><div class="t" style="left:194px;top:2.7px;color:#e4e5e6;letter-spacing:-0.150px">16.08</div>
<div class="t" style="left:26px;top:23.63px;color:#e4e5e6;letter-spacing:0.1px">multiview...</div><div class="t" style="left:98px;top:23.63px;color:#e4e5e6;letter-spacing:0.15px">multiviewer.via</div><div class="t" style="left:194px;top:23.63px;color:#e4e5e6;letter-spacing:-0.150px">08.02</div>
<div class="t" style="left:26px;top:44.56px;color:#e4e5e6;letter-spacing:0.2px">multizone</div><div class="t" style="left:98px;top:44.56px;color:#e4e5e6;letter-spacing:0.1px">multizone.via</div><div class="t" style="left:194px;top:44.56px;color:#e4e5e6;letter-spacing:-0.150px">03.12</div>
<div class="t" style="left:26px;top:65.49px;color:#e4e5e6;letter-spacing:-0.1px">Nick's-...</div><div class="t" style="left:98px;top:65.49px;color:#e4e5e6;letter-spacing:-0.1px">Nick's-Archiv...</div><div class="t" style="left:194px;top:65.49px;color:#e4e5e6;letter-spacing:-0.150px">22.01</div>
<div class="t" style="left:26px;top:86.42px;color:#e4e5e6;letter-spacing:0.15px">Performer</div><div class="t" style="left:98px;top:86.42px;color:#e4e5e6;letter-spacing:0.15px">Performer.via</div><div class="t" style="left:194px;top:86.42px;color:#e4e5e6;letter-spacing:-0.150px">23.09</div>
<div class="t" style="left:26px;top:107.35px;color:#e4e5e6;letter-spacing:0px">planar_re...</div><div class="t" style="left:98px;top:107.35px;color:#e4e5e6;letter-spacing:-0.1px">planar_reflect...</div><div class="t" style="left:194px;top:107.35px;color:#e4e5e6;letter-spacing:-0.150px">26.02</div>
<div class="t" style="left:26px;top:128.28px;color:#333f50;letter-spacing:0px">sample</div><div class="t" style="left:98px;top:128.28px;color:#333f50;letter-spacing:-0.1px">sample.via</div><div class="t" style="left:194px;top:128.28px;color:#333f50;letter-spacing:-0.150px">04.06</div>
<div class="t" style="left:26px;top:149.21px;color:#e4e5e6;letter-spacing:-0.1px">test_archi...</div><div class="t" style="left:98px;top:149.21px;color:#e4e5e6;letter-spacing:-0.12px">test_archive.via</div><div class="t" style="left:194px;top:149.21px;color:#e4e5e6;letter-spacing:-0.150px">26.02</div>
<div class="t" style="left:26px;top:170.14px;color:#e4e5e6;letter-spacing:-0.15px">Theycallit...</div><div class="t" style="left:98px;top:170.14px;color:#e4e5e6;letter-spacing:-0.05px">Theycallitatre...</div><div class="t" style="left:194px;top:170.14px;color:#e4e5e6;letter-spacing:-0.150px">06.12</div>
<div class="t" style="left:26px;top:191.07px;color:#e4e5e6;letter-spacing:0px">Viz4Interior</div><div class="t" style="left:98px;top:191.07px;color:#e4e5e6;letter-spacing:0.05px">Viz4Interior.via</div><div class="t" style="left:194px;top:191.07px;color:#e4e5e6;letter-spacing:-0.150px">30.04</div>
<div class="t" style="left:26px;top:212.0px;color:#e4e5e6;letter-spacing:-0.5px">Viz4Scenes</div><div class="t" style="left:98px;top:212.0px;color:#e4e5e6;letter-spacing:-0.42px">Viz4Scenes.via</div><div class="t" style="left:194px;top:212.0px;color:#e4e5e6;letter-spacing:-0.150px">14.02</div>
<div class="t" style="left:26px;top:232.93px;color:#e4e5e6;letter-spacing:-0.6px">VIZENG-2...</div><div class="t" style="left:98px;top:232.93px;color:#e4e5e6;letter-spacing:-0.47px">VIZENG-2002...</div><div class="t" style="left:194px;top:232.93px;color:#e4e5e6;letter-spacing:-0.150px">03.12</div>
<div class="t" style="left:26px;top:253.86px;color:#e4e5e6;letter-spacing:-0.6px">VIZENG-2...</div><div class="t" style="left:98px;top:253.86px;color:#e4e5e6;letter-spacing:-0.47px">VIZENG-2426...</div><div class="t" style="left:194px;top:253.86px;color:#e4e5e6;letter-spacing:-0.150px">01.10</div>
<div class="t" style="left:26px;top:274.79px;color:#e4e5e6;letter-spacing:-0.62px">VIZPL-884</div><div class="t" style="left:98px;top:274.79px;color:#e4e5e6;letter-spacing:-0.5px">VIZPL-884.via</div><div class="t" style="left:194px;top:274.79px;color:#e4e5e6;letter-spacing:-0.150px">23.09</div>
<div class="t" style="left:26px;top:295.72px;color:#e4e5e6;letter-spacing:-0.38px">VizStory_...</div><div class="t" style="left:98px;top:295.72px;color:#e4e5e6;letter-spacing:-0.36px">VizStory_scen...</div><div class="t" style="left:194px;top:295.72px;color:#e4e5e6;letter-spacing:-0.150px">15.11</div>
<div class="t" style="left:26px;top:316.65px;color:#e4e5e6;letter-spacing:-0.69px">VS_Exam...</div><div class="t" style="left:98px;top:316.65px;color:#e4e5e6;letter-spacing:-0.53px">VS_Examples....</div><div class="t" style="left:194px;top:316.65px;color:#e4e5e6;letter-spacing:-0.150px">11.02</div>
<div class="t" style="left:26px;top:337.58px;color:#e4e5e6;letter-spacing:-0.8px">VS_Floh</div><div class="t" style="left:98px;top:337.58px;color:#e4e5e6;letter-spacing:-0.56px">VS_Floh.via</div><div class="t" style="left:194px;top:337.58px;color:#e4e5e6;letter-spacing:-0.150px">11.02</div>
<div class="t" style="left:26px;top:358.51px;color:#e4e5e6;letter-spacing:0px">whitehou...</div><div class="t" style="left:98px;top:358.51px;color:#e4e5e6;letter-spacing:0.05px">whitehouse.via</div><div class="t" style="left:194px;top:358.51px;color:#e4e5e6;letter-spacing:-0.150px">11.02</div>
<div class="a" style="left:0px;top:371px;width:230px;height:5px;border-radius:3px;background:#c2c0c1"></div></div>
<div class="a" style="left:1059px;top:502px;width:24px;height:2px;background:#97989b"></div>
<!-- archive -->
<div class="a" style="left:864px;top:499.500px;width:414px;height:1px;background:#2a2d31"></div>
<div class="a" style="left:864px;top:529px;width:414px;height:1px;background:#2a2d31"></div>
<div class="a" style="left:864px;top:505px;width:63px;height:24px;background:#1f2227"></div>
<svg style="left:1237px;top:511px" width="12" height="12" viewBox="0 0 12 12"><g stroke="#5d6065" stroke-width="1.3" fill="none"><path d="M0.500 4V0.500H4M0.500 0.500L4.300 4.300M8 0.500H11.500V4M11.500 0.500L7.700 4.300M0.500 8V11.500H4M0.500 11.500L4.300 7.700M11.500 8V11.500H8M11.500 11.500L7.700 7.700"/></g></svg>
<svg style="left:1263px;top:513px" width="8" height="8" viewBox="0 0 8 8"><path d="M0.500 0.500L7.500 7.500M7.500 0.500L0.500 7.500" stroke="#5d6065" stroke-width="1.500" fill="none"/></svg>
<div class="a" style="left:873px;top:538px;width:125px;height:24px;border-radius:4px;background:#585b5f"></div>
<div class="a" style="left:977px;top:543px;width:1px;height:15px;background:#3a3d41"></div>
<svg style="left:984px;top:545px" width="6" height="11" viewBox="0 0 6 11"><path d="M0.700 4L3 0.900L5.300 4ZM0.700 7L3 10.100L5.300 7Z" fill="#c0c2c4"/></svg>
<div class="a" style="left:1002px;top:538px;width:138px;height:24px;border-radius:4px;background:#585b5f"></div>
<div class="a" style="left:1119px;top:543px;width:1px;height:15px;background:#3a3d41"></div>
<svg style="left:1127px;top:545px" width="6" height="11" viewBox="0 0 6 11"><path d="M0.700 4L3 0.900L5.300 4ZM0.700 7L3 10.100L5.300 7Z" fill="#c0c2c4"/></svg>
<div class="t" style="left:873px;top:510px;color:#f0f0f0;letter-spacing:-0.100px">Archive</div>
<div class="t" style="left:879px;top:544px;color:#f0f0f0;letter-spacing:-0.150px">Entry Point View</div>
<div class="t" style="left:1008px;top:544px;color:#f0f0f0;">All</div>
<div class="dk" style="left:873px;top:568px;width:124px;height:296px;overflow:hidden">
<div class="a" style="left:18px;top:1px;width:106px;height:17px;background:#80bbfa"></div>
<svg style="left:21.5px;top:4px" width="16" height="12" viewBox="0 0 18 14" preserveAspectRatio="none"><defs><linearGradient id="fs21.5_4" x1="0" y1="0" x2="0" y2="1"><stop offset="0" stop-color="#e4d4a0"/><stop offset="1" stop-color="#d6c088"/></linearGradient></defs><path d="M1.500 1Q1.500 0.400 2.100 0.400H15.600Q16.200 0.400 16.200 1V5H1.500Z" fill="#d8b870"/><path d="M2.200 2.700H16V7H2.200Z" fill="#c4d8f0"/><path d="M0.400 4.900Q0.300 4.100 1.100 4.100H12.200L13.500 5.700H17Q17.800 5.700 17.700 6.500L17 12.400Q16.900 13.100 16.200 13.100H1.900Q1.200 13.100 1.100 12.400Z" fill="url(#fs21.5_4)"/></svg>
<div class="t" style="left:44px;top:2px;color:#333f50;letter-spacing:-0.120px">File Entrypoint</div>
<svg style="left:21.5px;top:21px" width="16" height="12" viewBox="0 0 18 14" preserveAspectRatio="none"><defs><linearGradient id="fb21.5_21" x1="0" y1="0" x2="0" y2="1"><stop offset="0" stop-color="#b6bae0"/><stop offset="1" stop-color="#8c90c8"/></linearGradient></defs><path d="M1.500 1Q1.500 0.400 2.100 0.400H15.600Q16.200 0.400 16.200 1V5H1.500Z" fill="#8088cc"/><path d="M2.200 2.700H16V7H2.200Z" fill="#eef0f6"/><path d="M0.400 4.900Q0.300 4.100 1.100 4.100H12.200L13.500 5.700H17Q17.800 5.700 17.700 6.500L17 12.400Q16.900 13.100 16.200 13.100H1.900Q1.200 13.100 1.100 12.400Z" fill="url(#fb21.5_21)"/></svg>
<div class="t" style="left:44px;top:19px;color:#e4e5e6;letter-spacing:-0.200px">FolderA</div>
<div class="a" style="left:2px;top:290px;width:108px;height:5px;border-radius:3px;background:#c4c6c8"></div>
</div>
<div class="a" style="left:999px;top:689px;width:2px;height:24px;background:#97989b"></div>
<div class="dk" style="left:1002px;top:568px;width:276px;height:296px"></div>
<svg style="left:1004px;top:570px" width="61" height="61" viewBox="0 0 61 61">
<defs><linearGradient id="sk2" x1="0" y1="0" x2="1" y2="0"><stop offset="0" stop-color="#27363c"/><stop offset="0.350" stop-color="#5a5e5e"/><stop offset="0.700" stop-color="#b8a68c"/><stop offset="1" stop-color="#8c8476"/></linearGradient>
<linearGradient id="gd2" x1="0" y1="0" x2="0" y2="1"><stop offset="0" stop-color="#8a7250"/><stop offset="0.600" stop-color="#5c4a2c"/><stop offset="1" stop-color="#16140e"/></linearGradient>
<radialGradient id="vg2" cx="0.550" cy="0.450" r="0.750"><stop offset="0.450" stop-color="#000" stop-opacity="0"/><stop offset="1" stop-color="#000" stop-opacity="0.750"/></radialGradient>
<filter id="b3"><feGaussianBlur stdDeviation="1.400"/></filter><filter id="b4"><feGaussianBlur stdDeviation="0.900"/></filter><clipPath id="c4"><rect x="0" y="13" width="61" height="34"/></clipPath></defs>
<rect width="61" height="61" fill="#d6d8df"/>
<g clip-path="url(#c4)"><g transform="translate(0,13) scale(0.803,0.701) translate(0,-14)"><rect x="0" y="14" width="76" height="30" fill="url(#sky)"/>
<g filter="url(#b3)"><ellipse cx="50" cy="23" rx="22" ry="8" fill="#e0d4be"/><ellipse cx="66" cy="33" rx="11" ry="9" fill="#d8ccb6"/><ellipse cx="40" cy="33" rx="10" ry="5" fill="#cfc4b0"/><ellipse cx="19" cy="29" rx="17" ry="4.500" fill="#5a687c"/><ellipse cx="25" cy="38" rx="10" ry="3.500" fill="#3e4c5c"/><ellipse cx="8" cy="17" rx="18" ry="5" fill="#2e3632"/><ellipse cx="76" cy="43" rx="5" ry="5" fill="#2c3c44"/><ellipse cx="74" cy="15.500" rx="7" ry="2.500" fill="#3c4a52"/><ellipse cx="33" cy="18" rx="8" ry="3" fill="#7a7468"/><ellipse cx="56" cy="19" rx="5" ry="1.800" fill="#a8a096"/><ellipse cx="44" cy="27" rx="4" ry="1.500" fill="#b8ae9c"/><ellipse cx="68" cy="26" rx="5" ry="2" fill="#c0b6a4"/>
<path d="M-2 41L28 38L50 43L78 47V66H-2Z" fill="url(#gnd)"/><ellipse cx="14" cy="41" rx="16" ry="2.500" fill="#9c9484"/><ellipse cx="40" cy="48" rx="14" ry="4" fill="#b49464" opacity="0.600"/></g>
<g filter="url(#b4)"><path d="M31.500 44L32 37L33.500 31L35 30.500L36 33L36.500 44Z" fill="#3c3626"/><path d="M38.500 50L39.500 36L41 30L43 25.500L45.500 22.500L48 22L50 24L51 30L52 38L53 50Z" fill="#352e1e"/><path d="M52.500 50L53 36L54.500 31L56.500 28.500L59 28L61 30.500L62.500 36L64 44L66 50Z" fill="#383022"/><path d="M36.500 47L38 38L40 35.500L40 48Z" fill="#a07840"/><path d="M50.300 50L51 39L52.500 37L53.500 50Z" fill="#b08848"/><path d="M60.500 50L61 41L62.500 39L64.500 50Z" fill="#8a6a3c"/><path d="M62 44L70 47L78 50V57L58 52Z" fill="#3e3626"/><path d="M36 49L52 47L64 50L60 54L40 53Z" fill="#a88450" opacity="0.700"/></g>
</g>
<rect x="0" y="13" width="61" height="34" fill="url(#vg2)"/>
<circle cx="9.300" cy="36.600" r="6.300" fill="#7088a0" opacity="0.500"/><circle cx="9.300" cy="36.600" r="6.300" fill="none" stroke="#b8c4cc" stroke-width="0.700" opacity="0.600"/><path d="M9.300 32V41.500M7 35.300H11.600" stroke="#e8e8e8" stroke-width="0.900" opacity="0.900"/><ellipse cx="9.300" cy="42" rx="3" ry="1.300" fill="#68b8f0" opacity="0.800"/>
<text x="18" y="39.300" font-family="Liberation Serif" font-size="5.600" fill="#ececec" textLength="32" lengthAdjust="spacingAndGlyphs">SAMPLE SCENE</text></g>
</svg>
<div class="t" style="left:1004px;top:631px;width:62px;text-align:center;color:#dfe0e1;letter-spacing:-0.450px">MyScene</div>
<div class="a" style="left:1090px;top:866px;width:24px;height:2px;background:#97989b"></div>
<div class="dk" style="left:873px;top:892px;width:405px;height:44px"></div>
<div class="a" style="left:871px;top:940px;width:409px;height:28px;background:#5a5d61;border:2px solid #efd944;border-right:none;box-shadow:inset 0 0 0 1px #3c3c58"></div>
<div class="a" style="left:1278px;top:940px;width:2px;height:28px;background:#efd944"></div>
<div class="t" style="left:873px;top:871px;color:#dcddde;letter-spacing:-0.250px">Comment</div>
<div class="t" style="left:1059px;top:946.5px;color:#f0f0f0;letter-spacing:0.050px">Import Archive</div>
<svg style="left:0;top:0" width="1280" height="977" viewBox="0 0 1280 977"><g stroke="#14183a" stroke-width="3" stroke-opacity="0.500" fill="none"><path d="M891 580.500L112 217.300"/><path d="M1131.200 255L1113 570"/></g><g stroke="#ead24a" stroke-width="1.300" fill="none"><path d="M891 580.500L112 217.300"/><path d="M1131.200 255L1113 570"/></g><path d="M105 214L116.400 215.800L113.600 221.800Z" fill="#f2d848"/><path d="M1112.500 579.100L1109.600 568.100L1116.200 568.500Z" fill="#f2d848"/></svg>
</body></html>
